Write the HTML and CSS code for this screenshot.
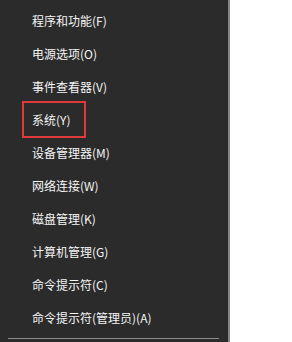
FILE: index.html
```html
<!DOCTYPE html>
<html lang="zh-CN">
<head>
  <meta charset="UTF-8">
  <meta name="viewport" content="width=device-width, initial-scale=1.0">
  <title>快速链接菜单</title>
  <link rel="stylesheet" href="styles.css">
</head>
<body>
  <div class="screen">
    <ul class="quick-menu">
      <li class="menu-item">程序和功能(F)</li>
      <li class="menu-item">电源选项(O)</li>
      <li class="menu-item">事件查看器(V)</li>
      <li class="menu-item"><span class="mark">系统(Y)</span></li>
      <li class="menu-item">设备管理器(M)</li>
      <li class="menu-item">网络连接(W)</li>
      <li class="menu-item">磁盘管理(K)</li>
      <li class="menu-item">计算机管理(G)</li>
      <li class="menu-item">命令提示符(C)</li>
      <li class="menu-item">命令提示符(管理员)(A)</li>
      <li class="separator"></li>
    </ul>
    <div class="desktop"></div>
  </div>
</body>
</html>
```

FILE: styles.css
```css
body {
  margin: 0;
  background-color: #ffffff;
  font-family: "Noto Sans CJK SC", "Noto Sans", sans-serif;
}
.screen {
  display: flex;
  height: 342px;
  overflow: hidden;
}
.quick-menu {
  list-style: none;
  margin: 0;
  padding: 4px 0 0 0;
  width: 228px;
  flex-shrink: 0;
  background-color: #2b2b2b;
  border-right: 2px solid #858585;
  display: flex;
  flex-direction: column;
}
.menu-item {
  height: 33px;
  display: flex;
  align-items: center;
  padding-left: 32px;
  font-size: 12px;
  color: #f5f5f5;
  white-space: nowrap;
}
.mark {
  display: inline-block;
  margin-left: -10px;
  padding: 8px 14px 8px 8px;
  border: 2px solid #e0393a;
  line-height: 17px;
}
.separator {
  margin: 4px 9px 0 8px;
  height: 1px;
  background-color: #8c8c8c;
}
.desktop {
  flex: 1;
  background-color: #ffffff;
}
```
